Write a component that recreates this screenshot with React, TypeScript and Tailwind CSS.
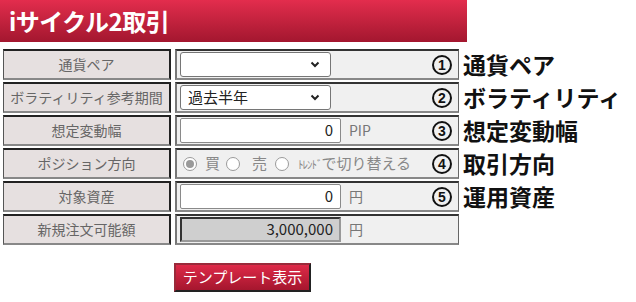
import React from 'react';

const jp = { fontFamily: '"Noto Sans CJK JP", "Liberation Sans", sans-serif' };

const rows = [
  { label: '通貨ペア', num: '1', note: '通貨ペア' },
  { label: 'ボラティリティ参考期間', num: '2', note: 'ボラティリティ' },
  { label: '想定変動幅', num: '3', note: '想定変動幅' },
  { label: 'ポジション方向', num: '4', note: '取引方向' },
  { label: '対象資産', num: '5', note: '運用資産' },
  { label: '新規注文可能額', num: '', note: '' },
];

const Chevron = () => (
  <svg width="10" height="7" viewBox="0 0 10 7" className="text-[#222]">
    <path d="M1.5 1.5 L5 5 L8.5 1.5" fill="none" stroke="currentColor" strokeWidth="2" />
  </svg>
);

const Select = ({ value }: { value: string }) => (
  <div className="flex h-[25px] w-[151px] items-center justify-between rounded-[3px] border border-[#767676] bg-white pl-[7px] pr-[10px] text-[15px] text-[#222]">
    <span>{value}</span>
    <Chevron />
  </div>
);

const NumInput = ({ value, unit, gray }: { value: string; unit: string; gray?: boolean }) => (
  <div className="flex items-center">
    <div
      className={
        gray
          ? 'flex h-[25px] w-[161px] items-center justify-end border-2 border-t-[#333] border-l-[#333] border-b-[#999] border-r-[#999] bg-[#cfcfcf] pr-[6px] text-[15px] text-[#222]'
          : 'flex h-[25px] w-[161px] items-center justify-end rounded-[2px] border border-[#8a8a8a] bg-white pr-[7px] text-[15px] text-[#222]'
      }
    >
      {value}
    </div>
    <span className="ml-[8px] text-[14px] text-[#777]">{unit}</span>
  </div>
);

const Radio = ({ checked }: { checked?: boolean }) => (
  <span className="flex h-[14px] w-[14px] items-center justify-center rounded-full border border-[#9a9a9a] bg-white">
    {checked && <span className="h-[8px] w-[8px] rounded-full bg-[#9a9a9a]" />}
  </span>
);

const Circled = ({ n }: { n: string }) => (
  <span className="flex h-[20px] w-[20px] items-center justify-center rounded-full border-2 border-[#111] text-[14px] font-bold leading-none text-[#111]" style={{ fontFamily: '"Liberation Sans", sans-serif' }}>
    {n}
  </span>
);

function Value({ i }: { i: number }) {
  if (i === 0) return <Select value="" />;
  if (i === 1) return <Select value="過去半年" />;
  if (i === 2) return <NumInput value="0" unit="PIP" />;
  if (i === 3)
    return (
      <div className="flex items-center gap-[6px] pl-[3px] text-[15px] text-[#888]">
        <Radio checked />
        <span className="ml-[2px]">買</span>
        <Radio />
        <span className="ml-[6px] mr-[2px]">売</span>
        <Radio />
        <span className="ml-[3px]">
          <span className="text-[11px] tracking-[-1px]">ﾄﾚﾝﾄﾞ</span>で切り替える
        </span>
      </div>
    );
  if (i === 4) return <NumInput value="0" unit="円" />;
  return <NumInput value="3,000,000" unit="円" gray />;
}

export default function App() {
  return (
    <div className="h-[302px] w-[636px] bg-white" style={jp}>
      <div className="flex h-[42px] w-[467px] items-center bg-gradient-to-b from-[#e32d4d] to-[#a3172f] pl-[9px]">
        <span className="text-[24px] font-bold tracking-[-0.5px] text-white">iサイクル2取引</span>
      </div>
      <div className="mt-[7px] flex">
        <div className="ml-[3px] flex w-[456px] flex-col gap-[2px]">
          {rows.map((r, i) => (
            <div key={i} className="flex h-[31px] gap-[4px]">
              <div className="flex w-[168px] items-center justify-center border-t-2 border-l border-r-2 border-b-2 border-t-[#222] border-l-[#555] border-r-[#222] border-b-[#888] bg-[#e6e0e0] text-[14px] text-[#666]">
                {r.label}
              </div>
              <div className="flex flex-1 items-center justify-between border-t-2 border-l-2 border-r border-b-2 border-t-[#333] border-l-[#777] border-r-[#666] border-b-[#888] bg-[#f0f0f0] pl-[3px] pr-[6px]">
                <Value i={i} />
                {r.num && <Circled n={r.num} />}
              </div>
            </div>
          ))}
        </div>
        <div className="ml-[4px] flex flex-col gap-[2px]">
          {rows.map((r, i) => (
            <div key={i} className="flex h-[31px] items-center text-[23px] font-bold text-[#111]">
              {r.note}
            </div>
          ))}
        </div>
      </div>
      <div className="mt-[18px] ml-[174px]">
        <button className="h-[29px] w-[137px] border-2 border-t-[#9a2a3a] border-l-[#9a2a3a] border-b-[#222] border-r-[#222] bg-gradient-to-b from-[#de2a48] to-[#a5162e] text-[15px] text-white">
          テンプレート表示
        </button>
      </div>
    </div>
  );
}
